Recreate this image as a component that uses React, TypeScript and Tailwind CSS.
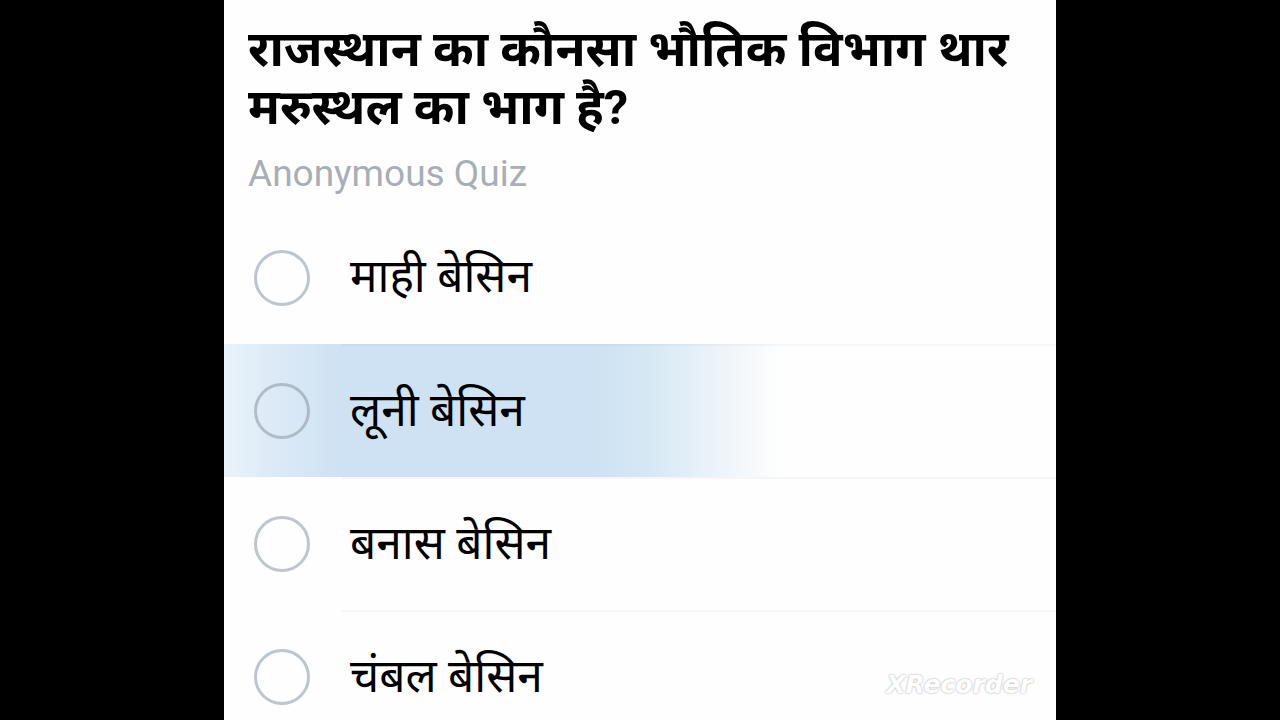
import clsx from 'clsx';

const options = [
  { id: 'mahi', label: 'माही बेसिन', pressed: false },
  { id: 'luni', label: 'लूनी बेसिन', pressed: true },
  { id: 'banas', label: 'बनास बेसिन', pressed: false },
  { id: 'chambal', label: 'चंबल बेसिन', pressed: false },
];

export default function App() {
  return (
    <div className="flex h-screen justify-center overflow-hidden bg-black font-['Roboto','Noto_Sans',sans-serif]">
      <main className="relative w-[65%] bg-[#fefefe] text-black">
        {/* Question */}
        <header className="px-6 pt-[21px]">
          <h1 className="text-[49px] leading-[58px] font-bold">
            राजस्थान का कौनसा भौतिक विभाग थार मरुस्थल का भाग है?
          </h1>
          <p className="mt-[15px] text-[37px] leading-[43px] text-[#a8aeb5]">Anonymous Quiz</p>
        </header>

        {/* Answers */}
        <form className="mt-4">
          {options.map((option, index) => (
            <label
              key={option.id}
              htmlFor={option.id}
              className={clsx(
                'flex h-[133px] items-center pl-[30px]',
                // touch highlight fading out to both sides
                option.pressed &&
                  'bg-[linear-gradient(90deg,#eaf3fa_0%,#dceaf6_6%,#cfe2f3_14%,#cfe2f3_45%,#d6e8f4_51%,#e9f2f9_58%,#fefefe_67%)]'
              )}
            >
              <input
                id={option.id}
                type="radio"
                name="answer"
                className="size-14 shrink-0 appearance-none rounded-full border-3 border-[#8a96a2]/55"
              />
              <span
                className={clsx(
                  'ml-8 flex flex-1 items-center self-stretch pb-1 pl-2 text-[46px] leading-[56px]',
                  index > 0 && 'border-t-2 border-[#8a96a2]/8'
                )}
              >
                {option.label}
              </span>
            </label>
          ))}
        </form>

        {/* Watermark */}
        <span className="absolute right-6 bottom-5 font-['DejaVu_Sans',sans-serif] text-[25px] leading-[30px] font-bold italic text-white [text-shadow:0_0_2px_#bbbbbb,0_0_2px_#cccccc]">
          XRecorder
        </span>
      </main>
    </div>
  );
}
